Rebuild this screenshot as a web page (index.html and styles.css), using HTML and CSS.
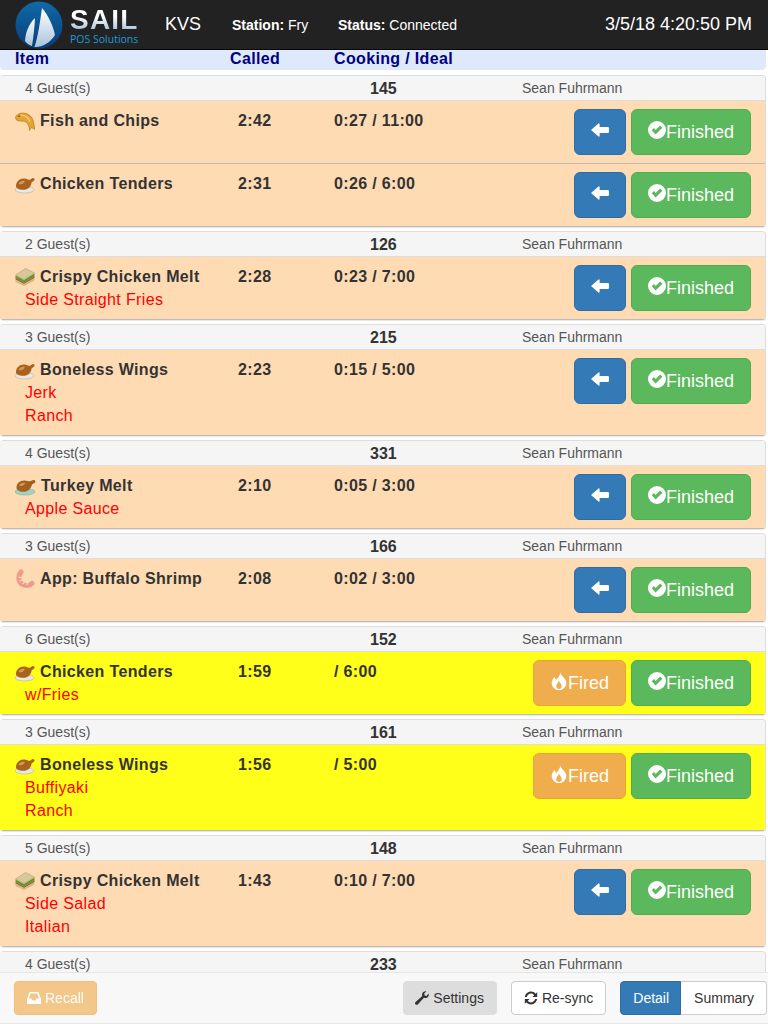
FILE: index.html
```html
<!DOCTYPE html>
<html lang="en">
<head>
  <meta charset="UTF-8" />
  <meta name="viewport" content="width=device-width, initial-scale=1.0"/>
  <title>KVS</title>
  <link rel="stylesheet" href="styles.css">
</head>

<body>
  <svg class="defs" width="0" height="0">
    <defs>
      <linearGradient id="ball" x1="0" y1="0" x2="0" y2="1">
        <stop offset="0" stop-color="#0f6aa8"/>
        <stop offset="1" stop-color="#0a3c78"/>
      </linearGradient>
      <linearGradient id="sail" x1="0" y1="0" x2="0" y2="1">
        <stop offset="0" stop-color="#ffffff"/>
        <stop offset="1" stop-color="#a9c4dc"/>
      </linearGradient>
      <symbol id="i-back" viewBox="0 0 18 18">
        <path d="M0 9 L7.5 2.4 Q8.6 2 8.6 3.2 V6 H16.8 Q18 6 18 7.2 V10.8 Q18 12 16.8 12 H8.6 V14.8 Q8.6 16 7.5 15.6 Z" fill="#fff"/>
      </symbol>
      <symbol id="i-check" viewBox="0 0 18 18">
        <path fill-rule="evenodd" fill="#fff" d="M9 0 A9 9 0 1 1 9 18 A9 9 0 1 1 9 0 Z M3.8 9.2 L7.6 13.4 L14.4 6.8 L12.2 4.6 L7.6 9 L6 7 Z"/>
      </symbol>
      <symbol id="i-fire" viewBox="0 0 18 18">
        <path fill-rule="evenodd" fill="#fff" d="M10 0 C10.5 3 14 5 15.5 8 C17.5 12 15.5 16 11 18 H7 C2.5 16 0.5 12 2.5 8 C3 7 3.5 6 4.5 5 C5 6 5.5 7 6 8 C8 6 10.5 3.5 10 0 Z M9 8.5 C9.5 10.5 11.8 12 11.8 14.2 C11.8 15.6 10.6 16.6 9 17 C7.4 16.6 6.2 15.6 6.2 14.2 C6.2 12 8.5 10.5 9 8.5 Z"/>
      </symbol>
      <symbol id="i-inbox" viewBox="0 0 14 14">
        <path fill-rule="evenodd" fill="#fff" d="M2.6 1 H11.4 L14 8 V13 H0 V8 Z M3.6 2.6 L2 7.6 H4.6 L5.6 9.4 H8.4 L9.4 7.6 H12 L10.4 2.6 Z"/>
      </symbol>
      <symbol id="i-wrench" viewBox="0 0 14 14">
        <path fill="#333" d="M13.6 2.6 C14.2 4.6 13 6.8 10.8 7 C10 7.1 9.4 6.9 8.9 6.7 L3 13.2 C2.2 14 1 14 0.4 13.2 C-0.2 12.6 -0.1 11.6 0.6 11 L7.3 5 C7 4.4 6.9 3.6 7.1 2.9 C7.6 0.9 9.6 -0.2 11.5 0.3 L9.2 2.6 L9.7 4.4 L11.4 4.9 Z"/>
      </symbol>
      <symbol id="i-sync" viewBox="0 0 14 14">
        <path fill="#333" d="M7 0.6 C8.9 0.6 10.5 1.4 11.6 2.7 L13.2 1.2 V6 H8.4 L10.2 4.2 C9.4 3.2 8.3 2.6 7 2.6 C5 2.6 3.3 4 2.9 5.9 H0.9 C1.3 2.9 3.9 0.6 7 0.6 Z M0.8 8 H5.6 L3.8 9.8 C4.6 10.8 5.7 11.4 7 11.4 C9 11.4 10.7 10 11.1 8.1 H13.1 C12.7 11.1 10.1 13.4 7 13.4 C5.1 13.4 3.5 12.6 2.4 11.3 L0.8 12.8 Z"/>
      </symbol>
      <symbol id="e-fish" viewBox="0 0 20 20">
        <path fill="#e3a632" stroke="#a8711c" stroke-width="0.6" d="M0.5 6 C2 2.5 8 1 12.5 3 C16.5 5 18.5 8.5 18.8 12.5 L20 18.5 L16.5 16.5 L14.5 19.5 C14.5 16 13.5 13 11 11 C8 9.5 3 11 1 8.5 Z"/>
        <circle cx="4" cy="5.2" r="0.8" fill="#5b3b10"/>
        <path fill="none" stroke="#f6d488" stroke-width="1.2" d="M6 4.2 C9 4.2 13 6.2 15.2 10.5"/>
      </symbol>
      <symbol id="e-bird" viewBox="0 0 20 20">
        <ellipse cx="9.5" cy="15.8" rx="9.5" ry="3.2" fill="#e8e8e0" stroke="#a9a9a0" stroke-width="0.5"/>
        <path fill="#a9621f" d="M1 12 C1 7.5 5 4 9.5 4.5 C11.5 4.8 13.5 6 15 5.8 L17.5 4 C19.5 3.8 20.2 6 18.8 6.8 L16.5 8.5 C16.5 12 13.5 15.8 8 15.8 C4 15.8 1 14.5 1 12 Z"/>
        <path fill="#d99a4c" d="M3.5 10 C4.5 7.5 7.5 6.2 10 7 C9 9.2 7 11 3.5 10 Z"/>
      </symbol>
      <symbol id="e-turkey" viewBox="0 0 21 20">
        <ellipse cx="10" cy="15.8" rx="10" ry="3.2" fill="#9fd4c6" stroke="#70a698" stroke-width="0.5"/>
        <path fill="#a4601e" d="M1.5 11.5 C1.5 7 5.5 4 10 4.5 C12 4.8 14 5.5 15.5 5 L18.5 4 C20.5 4 21 6.2 19.5 7 L17 8.5 C16.5 12 13.5 15.8 8 15.8 C4.5 15.8 1.5 14 1.5 11.5 Z"/>
        <path fill="#d99a4c" d="M4 9.5 C5 7.3 8 6.2 10.5 7 C9.5 9 7 10.7 4 9.5 Z"/>
      </symbol>
      <symbol id="e-sandwich" viewBox="0 0 20 20">
        <path fill="#d8c79b" stroke="#a8976f" stroke-width="0.5" d="M0.5 8 L10.5 1.5 L19.5 6 L9 12.5 Z"/>
        <path fill="#5f9a28" d="M0.5 8.5 L9 13 L19.5 6.5 L19.5 9.5 L9 15.5 L0.5 11 Z"/>
        <path fill="#a9533a" d="M0.5 11 L9 15.5 L19.5 9.5 L19.5 11 L9 17 L0.5 12.5 Z"/>
        <path fill="#cdb98a" d="M0.5 12.5 L9 17 L19.5 11 L19.5 13.5 L9 19 L0.5 15 Z"/>
      </symbol>
      <symbol id="e-shrimp" viewBox="0 0 20 20">
        <path fill="none" stroke="#ee9c8a" stroke-width="5" stroke-linecap="round" d="M6 3 C2.5 7 3 14 9 16 C12 17 15 16.5 17 14.5"/>
        <path fill="none" stroke="#fbdcd0" stroke-width="1.2" d="M3.5 8 L7 9 M4.5 12 L7.5 11 M8 15 L9.5 12.5 M12 16 L12.5 13.5"/>
      </symbol>
    </defs>
  </svg>

  <div class="page">
    <div class="navbar">
      <div class="logo">
        <svg class="logo-ball" width="48" height="48" viewBox="0 0 48 48">
          <circle cx="24" cy="24" r="23.5" fill="url(#ball)"/>
          <path fill="url(#sail)" d="M20 17 C14 23 10.5 31 10 40 C12 42.5 14.5 44.2 17 45 C18.5 36 19.5 26 20 17 Z"/>
          <path fill="url(#sail)" d="M27 7 C25 20 23.5 34 19.5 46 C27 46.5 35 42 40 34 C38 24 33 14 27 7 Z"/>
        </svg>
        <div class="logo-text">
          <div class="logo-name">SAIL</div>
          <div class="logo-sub">POS Solutions</div>
        </div>
      </div>
      <div class="app-name">KVS</div>
      <div class="nav-info station"><b>Station:</b> Fry</div>
      <div class="nav-info status"><b>Status:</b> Connected</div>
      <div class="clock">3/5/18 4:20:50 PM</div>
    </div>

    <div class="columns">
      <div class="col-item">Item</div>
      <div class="col-called">Called</div>
      <div class="col-cook">Cooking / Ideal</div>
    </div>

    <div class="list">

      <div class="panel">
        <div class="panel-head"><span class="guests">4 Guest(s)</span><span class="ticket">145</span><span class="server">Sean Fuhrmann</span></div>
        <div class="row">
          <div class="item"><div class="name"><svg class="emoji"><use href="#e-fish"/></svg>Fish and Chips</div></div>
          <div class="called">2:42</div>
          <div class="cook">0:27 / 11:00</div>
          <div class="actions">
            <div class="btn btn-blue"><svg class="ico"><use href="#i-back"/></svg></div>
            <div class="btn btn-green"><svg class="ico"><use href="#i-check"/></svg>Finished</div>
          </div>
        </div>
        <div class="row">
          <div class="item"><div class="name"><svg class="emoji"><use href="#e-bird"/></svg>Chicken Tenders</div></div>
          <div class="called">2:31</div>
          <div class="cook">0:26 / 6:00</div>
          <div class="actions">
            <div class="btn btn-blue"><svg class="ico"><use href="#i-back"/></svg></div>
            <div class="btn btn-green"><svg class="ico"><use href="#i-check"/></svg>Finished</div>
          </div>
        </div>
      </div>

      <div class="panel">
        <div class="panel-head"><span class="guests">2 Guest(s)</span><span class="ticket">126</span><span class="server">Sean Fuhrmann</span></div>
        <div class="row">
          <div class="item">
            <div class="name"><svg class="emoji"><use href="#e-sandwich"/></svg>Crispy Chicken Melt</div>
            <div class="mod">Side Straight Fries</div>
          </div>
          <div class="called">2:28</div>
          <div class="cook">0:23 / 7:00</div>
          <div class="actions">
            <div class="btn btn-blue"><svg class="ico"><use href="#i-back"/></svg></div>
            <div class="btn btn-green"><svg class="ico"><use href="#i-check"/></svg>Finished</div>
          </div>
        </div>
      </div>

      <div class="panel">
        <div class="panel-head"><span class="guests">3 Guest(s)</span><span class="ticket">215</span><span class="server">Sean Fuhrmann</span></div>
        <div class="row">
          <div class="item">
            <div class="name"><svg class="emoji"><use href="#e-bird"/></svg>Boneless Wings</div>
            <div class="mod">Jerk</div>
            <div class="mod">Ranch</div>
          </div>
          <div class="called">2:23</div>
          <div class="cook">0:15 / 5:00</div>
          <div class="actions">
            <div class="btn btn-blue"><svg class="ico"><use href="#i-back"/></svg></div>
            <div class="btn btn-green"><svg class="ico"><use href="#i-check"/></svg>Finished</div>
          </div>
        </div>
      </div>

      <div class="panel">
        <div class="panel-head"><span class="guests">4 Guest(s)</span><span class="ticket">331</span><span class="server">Sean Fuhrmann</span></div>
        <div class="row">
          <div class="item">
            <div class="name"><svg class="emoji wide"><use href="#e-turkey"/></svg>Turkey Melt</div>
            <div class="mod">Apple Sauce</div>
          </div>
          <div class="called">2:10</div>
          <div class="cook">0:05 / 3:00</div>
          <div class="actions">
            <div class="btn btn-blue"><svg class="ico"><use href="#i-back"/></svg></div>
            <div class="btn btn-green"><svg class="ico"><use href="#i-check"/></svg>Finished</div>
          </div>
        </div>
      </div>

      <div class="panel">
        <div class="panel-head"><span class="guests">3 Guest(s)</span><span class="ticket">166</span><span class="server">Sean Fuhrmann</span></div>
        <div class="row">
          <div class="item"><div class="name"><svg class="emoji"><use href="#e-shrimp"/></svg>App: Buffalo Shrimp</div></div>
          <div class="called">2:08</div>
          <div class="cook">0:02 / 3:00</div>
          <div class="actions">
            <div class="btn btn-blue"><svg class="ico"><use href="#i-back"/></svg></div>
            <div class="btn btn-green"><svg class="ico"><use href="#i-check"/></svg>Finished</div>
          </div>
        </div>
      </div>

      <div class="panel">
        <div class="panel-head"><span class="guests">6 Guest(s)</span><span class="ticket">152</span><span class="server">Sean Fuhrmann</span></div>
        <div class="row fired">
          <div class="item">
            <div class="name"><svg class="emoji"><use href="#e-bird"/></svg>Chicken Tenders</div>
            <div class="mod">w/Fries</div>
          </div>
          <div class="called">1:59</div>
          <div class="cook">/ 6:00</div>
          <div class="actions">
            <div class="btn btn-orange"><svg class="ico"><use href="#i-fire"/></svg>Fired</div>
            <div class="btn btn-green"><svg class="ico"><use href="#i-check"/></svg>Finished</div>
          </div>
        </div>
      </div>

      <div class="panel">
        <div class="panel-head"><span class="guests">3 Guest(s)</span><span class="ticket">161</span><span class="server">Sean Fuhrmann</span></div>
        <div class="row fired">
          <div class="item">
            <div class="name"><svg class="emoji"><use href="#e-bird"/></svg>Boneless Wings</div>
            <div class="mod">Buffiyaki</div>
            <div class="mod">Ranch</div>
          </div>
          <div class="called">1:56</div>
          <div class="cook">/ 5:00</div>
          <div class="actions">
            <div class="btn btn-orange"><svg class="ico"><use href="#i-fire"/></svg>Fired</div>
            <div class="btn btn-green"><svg class="ico"><use href="#i-check"/></svg>Finished</div>
          </div>
        </div>
      </div>

      <div class="panel">
        <div class="panel-head"><span class="guests">5 Guest(s)</span><span class="ticket">148</span><span class="server">Sean Fuhrmann</span></div>
        <div class="row">
          <div class="item">
            <div class="name"><svg class="emoji"><use href="#e-sandwich"/></svg>Crispy Chicken Melt</div>
            <div class="mod">Side Salad</div>
            <div class="mod">Italian</div>
          </div>
          <div class="called">1:43</div>
          <div class="cook">0:10 / 7:00</div>
          <div class="actions">
            <div class="btn btn-blue"><svg class="ico"><use href="#i-back"/></svg></div>
            <div class="btn btn-green"><svg class="ico"><use href="#i-check"/></svg>Finished</div>
          </div>
        </div>
      </div>

      <div class="panel">
        <div class="panel-head"><span class="guests">4 Guest(s)</span><span class="ticket">233</span><span class="server">Sean Fuhrmann</span></div>
      </div>

    </div>

    <div class="footer">
      <div class="fbtn recall"><svg class="fico"><use href="#i-inbox"/></svg>Recall</div>
      <div class="fbtn settings"><svg class="fico"><use href="#i-wrench"/></svg>Settings</div>
      <div class="fbtn resync"><svg class="fico"><use href="#i-sync"/></svg>Re-sync</div>
      <div class="btn-group">
        <div class="fbtn detail">Detail</div>
        <div class="fbtn summary">Summary</div>
      </div>
    </div>
  </div>
</body>
</html>
```

FILE: styles.css
```css
* {
  box-sizing: border-box;
}

body {
  margin: 0;
  padding: 0;
  font-family: "Liberation Sans", Arial, sans-serif;
  font-size: 14px;
  color: #333;
  background-color: #fff;
}

.defs {
  display: block;
  height: 0;
}

.page {
  height: 1024px;
  display: flex;
  flex-direction: column;
  overflow: hidden;
}

/* top bar */
.navbar {
  height: 50px;
  flex: none;
  background-color: #222;
  border-bottom: 1px solid #080808;
  color: #fff;
  display: flex;
  align-items: center;
  padding: 0 16px 0 15px;
}

.logo {
  width: 150px;
  display: flex;
  align-items: center;
  gap: 7px;
}

.logo-ball {
  flex: none;
}

.logo-text {
  padding-top: 3px;
}

.logo-name {
  font-weight: 700;
  font-size: 28px;
  line-height: 25px;
  letter-spacing: 1.2px;
  background: linear-gradient(#ffffff 35%, #9fbcd6);
  -webkit-background-clip: text;
  background-clip: text;
  color: transparent;
}

.logo-sub {
  font-family: "Open Sans", sans-serif;
  font-size: 10.5px;
  line-height: 14px;
  color: #1e9ad6;
}

.app-name {
  font-size: 18px;
  width: 67px;
}

.nav-info {
  font-size: 14px;
}

.station {
  width: 106px;
}

.clock {
  font-size: 18px;
  margin-left: auto;
}

/* column titles */
.columns {
  height: 20px;
  width: 766px;
  flex: none;
  background-color: #dfe9fc;
  color: #000080;
  font-size: 16px;
  font-weight: bold;
  line-height: 18px;
  letter-spacing: 0.35px;
  display: flex;
  padding-left: 15px;
  border-radius: 0 0 4px 4px;
}

.col-item {
  width: 215px;
}

.col-called {
  width: 104px;
}

/* tickets */
.list {
  flex: 1;
  min-height: 0;
  overflow: hidden;
  padding-top: 5px;
}

.panel {
  width: 766px;
  margin-bottom: 4px;
  border-top: 1px solid #ddd;
  border-right: 1px solid #ddd;
  border-bottom: 1px solid #bbb;
  border-radius: 4px;
  background-color: #fff;
  box-shadow: 0 1px 1px rgba(0, 0, 0, 0.1);
}

.panel-head {
  height: 25px;
  background-color: #f5f5f5;
  border-bottom: 1px solid #ddd;
  display: flex;
  align-items: center;
  color: #555;
  border-radius: 3px 3px 0 0;
}

.guests {
  margin-left: 25px;
  width: 345px;
}

.ticket {
  width: 152px;
  margin-top: 2px;
  font-size: 16px;
  font-weight: bold;
  color: #333;
}

.row {
  display: flex;
  padding: 8px 14px 8px 15px;
  background-color: #ffdbb3;
  font-size: 16px;
  line-height: 23px;
  letter-spacing: 0.35px;
  min-height: 62px;
}

.row + .row {
  border-top: 1px solid #bbb;
  min-height: 63px;
}

.row.fired {
  background-color: #ffff1a;
}

.item {
  width: 223px;
  flex: none;
}

.name {
  font-weight: bold;
  color: #333;
  display: flex;
  align-items: center;
}

.emoji {
  width: 20px;
  height: 20px;
  margin-right: 5px;
  flex: none;
}

.emoji.wide {
  width: 21px;
}

.mod {
  color: #ff0000;
  padding-left: 10px;
}

.called {
  width: 96px;
  flex: none;
  font-weight: bold;
}

.cook {
  font-weight: bold;
}

.actions {
  margin-left: auto;
  display: flex;
  gap: 5px;
  letter-spacing: 0;
}

.btn {
  height: 46px;
  display: flex;
  align-items: center;
  justify-content: center;
  padding: 0 16px;
  font-size: 18px;
  color: #fff;
  border: 1px solid transparent;
  border-radius: 6px;
}

.btn-blue {
  background-color: #337ab7;
  border-color: #2e6da4;
}

.btn-green {
  background-color: #5cb85c;
  border-color: #4cae4c;
}

.btn-orange {
  background-color: #f0ad4e;
  border-color: #eea236;
}

.ico {
  width: 18px;
  height: 18px;
  position: relative;
  top: -2px;
}

/* bottom bar */
.footer {
  height: 52px;
  flex: none;
  background-color: #f8f8f8;
  border-top: 1px solid #e7e7e7;
  border-bottom: 1px solid #e7e7e7;
  display: flex;
  align-items: center;
  gap: 14px;
  padding: 0 1px 0 14px;
}

.fbtn {
  height: 34px;
  padding: 0 12px;
  display: flex;
  align-items: center;
  border: 1px solid #ccc;
  border-radius: 4px;
  background-color: #fff;
  color: #333;
  white-space: nowrap;
}

.fico {
  width: 14px;
  height: 14px;
  margin-right: 4px;
  flex: none;
}

.recall {
  background-color: #f0ad4e;
  border-color: #eea236;
  color: #fff;
  opacity: 0.65;
  margin-right: auto;
}

.settings {
  background-color: #ddd;
  border-color: #ddd;
  padding-left: 11px;
}

.btn-group {
  display: flex;
}

.detail {
  background-color: #337ab7;
  border-color: #2e6da4;
  color: #fff;
  border-radius: 4px 0 0 4px;
  padding-right: 11px;
}

.summary {
  border-left: 0;
  border-radius: 0 4px 4px 0;
  padding-left: 13px;
}
```
